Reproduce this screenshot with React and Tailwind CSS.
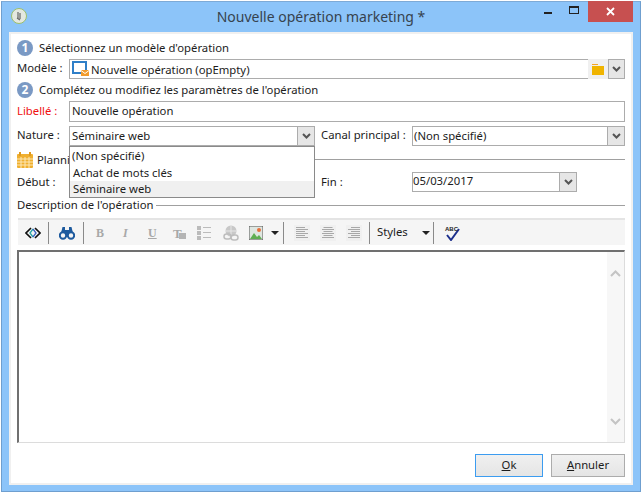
import React from 'react';

const Chevron = ({ c = '#555' }) => (
  <svg width="9" height="6" viewBox="0 0 9 6"><path d="M1 1l3.5 3.5L8 1" fill="none" stroke={c} strokeWidth="2" /></svg>
);

const ArrowBtn = () => (
  <div className="w-[17px] h-full shrink-0 flex items-center justify-center bg-[#e6e6e6] border-l border-[#acacac]">
    <Chevron />
  </div>
);

const Select = ({ className = '', textClass = 'pl-[2px] leading-[17px]', text, children }) => (
  <div className={`relative h-5 flex border border-[#acacac] bg-white ${className}`}>
    <div className={`flex-1 truncate ${textClass}`}>{text}</div>
    <ArrowBtn />
    {children}
  </div>
);

const Step = ({ n, children, className = '' }) => (
  <div className={`h-4 flex items-center ${className}`}>
    <div className="w-4 h-4 rounded-full bg-[#7a99c4] text-white text-[12px] font-bold flex items-center justify-center leading-none">{n}</div>
    <span className="ml-[6px]">{children}</span>
  </div>
);

const Sep = ({ className = '' }) => <div className={`w-px h-[22px] bg-[#8a8a8a] shrink-0 ${className}`} />;

const Caret = ({ className = '' }) => (
  <svg className={`shrink-0 ${className}`} width="8" height="4" viewBox="0 0 8 4"><path d="M0 0h8L4 4z" fill="#222" /></svg>
);

const Align = ({ kind, className = '' }) => {
  const rows = [0, 1, 2, 3, 4, 5];
  return (
    <div className={`w-4 h-4 bg-[#f0f0f0] flex items-center justify-center shrink-0 ${className}`}>
      <svg width="12" height="12" viewBox="0 0 12 12">
        {rows.map((r) => {
          const w = r % 2 ? 12 : 9;
          const x = kind === 'l' ? 0 : kind === 'c' ? (12 - w) / 2 : 12 - w;
          return <rect key={r} x={x} y={r * 2} width={w} height="1" fill="#a8a8a8" />;
        })}
      </svg>
    </div>
  );
};

const Gray = ({ children, className = '' }) => (
  <span className={`text-[#a8a8a8] font-bold shrink-0 font-['Liberation_Serif',serif] text-[12px] leading-none ${className}`}>{children}</span>
);

export default function App() {
  return (
    <div className="w-[642px] h-[493px] bg-white pl-px pt-px font-['Noto_Sans',sans-serif] text-[11.3px] text-[#1c1c1c] overflow-hidden">
      <div className="w-[640px] h-[491px] bg-[#8cc4f9] border border-[#6f9fcf] border-t-[#7eaad6] flex flex-col px-[7px] pb-[6px]">
        {/* title bar */}
        <div className="h-[30px] shrink-0 flex">
          <div className="w-[16px] h-[16px] mt-[6px] ml-[2px] rounded-full bg-[#e4e8e0] border border-[#9cc06c] flex items-center justify-center">
            <svg width="10" height="10" viewBox="0 0 10 10"><path d="M4 1v7M6 2v6M3 7l3 2" stroke="#666" strokeWidth="1.2" fill="none" /></svg>
          </div>
          <div className="flex-1 text-center text-[14px] leading-[30px] text-[#36424e] pl-[80px] whitespace-nowrap">Nouvelle opération marketing *</div>
          <div className="flex h-[21px] -mt-px">
            <div className="w-[26px] flex items-center justify-center"><div className="w-[8px] h-[2px] bg-[#222] mt-[2px]" /></div>
            <div className="w-[26px] flex items-center justify-center"><div className="w-[10px] h-[8px] border border-t-2 border-[#222] -mt-[3px]" /></div>
            <div className="w-[45px] ml-[1px] bg-[#c75050] flex items-center justify-center">
              <svg width="9" height="9" viewBox="0 0 9 9"><path d="M1 1l7 7M8 1L1 8" stroke="#fff" strokeWidth="1.8" /></svg>
            </div>
          </div>
        </div>

        {/* client */}
        <div className="flex-1 border-2 border-[#f0f0f0] bg-white px-[6px] pt-[6px] flex flex-col">
          <Step n="1">Sélectionnez un modèle d'opération</Step>

          <div className="mt-[3px] h-5 flex">
            <div className="w-[52px] leading-[18px] shrink-0">Modèle :</div>
            <div className="flex-1 flex border border-[#acacac] border-r-0 items-center pl-[2px]">
              <svg width="17" height="16" viewBox="0 0 17 16" className="shrink-0">
                <rect x="1" y="1" width="13" height="11" fill="none" stroke="#2f7fc8" strokeWidth="2" />
                <rect x="9" y="9" width="8" height="6" fill="#f39c2c" />
                <path d="M9 9.5l4 3 4-3" stroke="#fff" fill="none" />
              </svg>
              <span className="ml-[2px] leading-[17px]">Nouvelle opération (opEmpty)</span>
            </div>
            <div className="w-5 bg-[#f0f0f0] flex items-center justify-center shrink-0">
              <svg width="12" height="11" viewBox="0 0 12 11"><path d="M0 0h6v1H0z" fill="#f5a623" /><rect y="2" width="12" height="9" fill="#f0b400" /></svg>
            </div>
            <div className="w-[17px] bg-[#e6e6e6] border border-[#acacac] flex items-center justify-center shrink-0"><Chevron /></div>
          </div>

          <Step n="2" className="mt-[3px]">Complétez ou modifiez les paramètres de l'opération</Step>

          <div className="mt-[3px] h-[21px] flex">
            <div className="w-[52px] leading-[20px] text-[#f01010] shrink-0">Libellé :</div>
            <div className="flex-1 border border-[#acacac] pl-[2px] leading-[18px]">Nouvelle opération</div>
          </div>

          <div className="mt-[4px] h-5 flex relative z-10">
            <div className="w-[52px] leading-[17px] shrink-0">Nature :</div>
            <Select className="w-[246px] shrink-0" text="Séminaire web">
              <div className="absolute left-[-1px] top-[19px] w-[246px] h-[52px] bg-white border border-[#8a8a8a] pt-[2px]">
                <div className="h-4 pl-[2px] leading-[14px]">(Non spécifié)</div>
                <div className="h-4 pl-[3px] leading-[16px]">Achat de mots clés</div>
                <div className="h-4 pl-[3px] leading-[16px] bg-[#f0f0f0]">Séminaire web</div>
              </div>
            </Select>
            <div className="w-[97px] pl-[6px] leading-[17px] shrink-0 whitespace-nowrap">Canal principal :</div>
            <Select className="flex-1" textClass="pl-px leading-[17px]" text="(Non spécifié)" />
          </div>

          <div className="mt-[5px] h-[18px] flex items-center">
            <svg width="16" height="16" viewBox="0 0 16 16" className="shrink-0">
              <rect y="2" width="16" height="14" rx="1" fill="#f0b030" />
              <rect x="2" y="0" width="2" height="4" fill="#e09a20" />
              <rect x="12" y="0" width="2" height="4" fill="#e09a20" />
              <path d="M0 7h16M0 10h16M0 13h16M4 5v11M8 5v11M12 5v11" stroke="#fde7b4" strokeWidth="1" />
            </svg>
            <span className="ml-[4px] w-[32px] overflow-hidden whitespace-nowrap">Planning</span>
            <div className="flex-1 h-px bg-[#a0a0a0] ml-[4px] -mt-[2px]" />
          </div>

          <div className="mt-[3px] h-5 flex">
            <div className="w-[304px] leading-[19px] shrink-0">Début :</div>
            <div className="w-[91px] leading-[19px] shrink-0">Fin :</div>
            <Select className="w-[165px]" textClass="leading-[15px]" text="05/03/2017" />
          </div>

          <div className="mt-[5px] h-4 flex items-center">
            <span>Description de l'opération</span>
            <div className="flex-1 h-px bg-[#a0a0a0] ml-[2px]" />
          </div>

          {/* toolbar */}
          <div className="mt-[5px] h-[27px] ml-px bg-[#f5f5f5] border-t-2 border-[#e4e4e4] flex items-center shrink-0">
            <svg width="16" height="14" viewBox="0 0 16 14" className="ml-[7px] shrink-0">
              <path d="M6 2L1 7l5 5" fill="none" stroke="#111" strokeWidth="1.6" />
              <path d="M10 2l5 5-5 5" fill="none" stroke="#111" strokeWidth="1.6" />
              <path d="M8 3L5 7l3 4" fill="none" stroke="#2aa6a6" strokeWidth="1.3" />
              <path d="M8 3l3 4-3 4" fill="none" stroke="#3a62c0" strokeWidth="1.3" />
            </svg>
            <Sep className="ml-[7px]" />
            <svg width="16" height="14" viewBox="0 0 16 14" className="ml-[10px] shrink-0">
              <circle cx="4" cy="9.5" r="3.2" fill="none" stroke="#1d5a9e" strokeWidth="2" />
              <circle cx="12" cy="9.5" r="3.2" fill="none" stroke="#1d5a9e" strokeWidth="2" />
              <path d="M2 7l1.5-6h2.5v6zM14 7l-1.5-6H10v6z" fill="#1d5a9e" />
              <rect x="6" y="4" width="4" height="4" fill="#1d5a9e" />
            </svg>
            <Sep className="ml-[8px]" />
            <Gray className="w-[8px] ml-[12px]">B</Gray>
            <Gray className="w-[6px] ml-[19px] italic">I</Gray>
            <Gray className="w-[9px] ml-[19px] underline">U</Gray>
            <div className="ml-[16px] w-[13px] h-[12px] relative shrink-0">
              <Gray className="absolute left-0 top-0 text-[13px]">T</Gray>
              <div className="absolute right-0 bottom-0 w-[7px] h-[6px] bg-[#b4b4b4]" />
            </div>
            <svg width="14" height="14" viewBox="0 0 14 14" className="ml-[11px] shrink-0" fill="#bbb">
              <rect x="0" y="0" width="4" height="4" />
              <rect x="0" y="5" width="4" height="4" />
              <rect x="0" y="10" width="4" height="4" />
              <rect x="6" y="1" width="8" height="1" />
              <rect x="6" y="6" width="8" height="1" />
              <rect x="6" y="11" width="8" height="1" />
            </svg>
            <svg width="16" height="16" viewBox="0 0 16 16" className="ml-[12px] shrink-0">
              <circle cx="8" cy="6" r="5.5" fill="#c8c8c8" />
              <path d="M3 6h10M8 1v10" stroke="#e6e6e6" />
              <rect x="1" y="9" width="7" height="5" rx="2.5" fill="none" stroke="#bdbdbd" strokeWidth="1.5" />
              <rect x="8" y="10" width="7" height="5" rx="2.5" fill="none" stroke="#bdbdbd" strokeWidth="1.5" />
            </svg>
            <svg width="14" height="14" viewBox="0 0 14 14" className="ml-[10px] shrink-0">
              <rect width="14" height="14" fill="#dfe6e0" stroke="#555" />
              <path d="M1 13l4-6 3 4 2-2 3 4z" fill="#5fae52" />
              <circle cx="10" cy="4" r="2" fill="#e8703a" />
            </svg>
            <Caret className="ml-[8px]" />
            <Sep className="ml-[4px]" />
            <Align kind="l" className="ml-[10px]" />
            <Align kind="c" className="ml-[10px]" />
            <Align kind="r" className="ml-[10px]" />
            <Sep className="ml-[7px]" />
            <span className="ml-[7px] w-[40px] shrink-0">Styles</span>
            <Caret className="ml-[5px]" />
            <Sep className="ml-[3px]" />
            <svg width="16" height="16" viewBox="0 0 16 16" className="ml-[10px] shrink-0">
              <path d="M3 10L7 15 15 4" fill="none" stroke="#1c2f8c" strokeWidth="2" />
              <text x="1" y="6" fontSize="6" fontWeight="bold" fill="#222" fontFamily="Liberation Sans">ABC</text>
            </svg>
          </div>

          {/* editor */}
          <div className="mt-[5px] h-[193px] shrink-0 flex border-t-2 border-l-2 border-t-[#707070] border-l-[#707070] border-b border-r border-b-[#dcdcdc] border-r-[#dcdcdc]">
            <div className="flex-1" />
            <div className="w-[17px] bg-[#f7f7f7] flex flex-col items-center justify-between pt-[18px] pb-[17px]">
              <svg width="11" height="7" viewBox="0 0 11 7"><path d="M1 6l4.5-4.5L10 6" fill="none" stroke="#c4c4c4" strokeWidth="2" /></svg>
              <svg width="11" height="7" viewBox="0 0 11 7"><path d="M1 1l4.5 4.5L10 1" fill="none" stroke="#c4c4c4" strokeWidth="2" /></svg>
            </div>
          </div>

          {/* footer */}
          <div className="mt-[11px] h-[23px] flex justify-end gap-2">
            <div className="w-[68px] border border-[#3c9cf0] bg-gradient-to-b from-[#f0f0f0] to-[#e5e5e5] text-center leading-[20px]"><span className="underline">O</span>k</div>
            <div className="w-[74px] border border-[#acacac] bg-gradient-to-b from-[#f0f0f0] to-[#e5e5e5] text-center leading-[20px]"><span className="underline">A</span>nnuler</div>
          </div>
        </div>
      </div>
    </div>
  );
}
